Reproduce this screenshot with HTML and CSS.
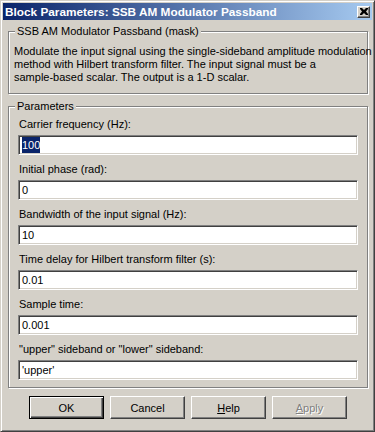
FILE: index.html
```html
<!DOCTYPE html>
<html lang="en">
<head>
    <meta charset="UTF-8">
    <meta name="viewport" content="width=device-width, initial-scale=1.0">
    <title>Block Parameters</title>
    <link rel="stylesheet" href="styles.css">
</head>
<body>
    <div class="window">
        <div class="titlebar">
            <span class="title">Block Parameters: SSB AM Modulator Passband</span>
            <div class="close-btn">
                <svg width="8" height="7" viewBox="0 0 8 7">
                    <path d="M0 0h2l2 2 2-2h2v1L6 3.5 8 6v1H6L4 5 2 7H0V6l2-2.5L0 1z" fill="#000"/>
                </svg>
            </div>
        </div>

        <div class="content">
            <div class="group group-mask">
                <span class="legend">SSB AM Modulator Passband (mask)</span>
                <p class="desc">Modulate the input signal using the single-sideband amplitude modulation<br>method with Hilbert transform filter. The input signal must be a<br>sample-based scalar. The output is a 1-D scalar.</p>
            </div>

            <div class="group group-params">
                <span class="legend">Parameters</span>
                <div class="param">
                    <div class="label">Carrier frequency (Hz):</div>
                    <div class="field"><span class="sel">100</span></div>
                </div>
                <div class="param">
                    <div class="label">Initial phase (rad):</div>
                    <div class="field">0</div>
                </div>
                <div class="param">
                    <div class="label">Bandwidth of the input signal (Hz):</div>
                    <div class="field">10</div>
                </div>
                <div class="param">
                    <div class="label">Time delay for Hilbert transform filter (s):</div>
                    <div class="field">0.01</div>
                </div>
                <div class="param">
                    <div class="label">Sample time:</div>
                    <div class="field">0.001</div>
                </div>
                <div class="param">
                    <div class="label">"upper" sideband or "lower" sideband:</div>
                    <div class="field">'upper'</div>
                </div>
            </div>

            <div class="buttons">
                <div class="btn btn-default"><span>OK</span></div>
                <div class="btn"><span>Cancel</span></div>
                <div class="btn"><span><u>H</u>elp</span></div>
                <div class="btn btn-disabled"><span><u>A</u>pply</span></div>
            </div>
        </div>
    </div>
</body>
</html>
```

FILE: styles.css
```css
body {
    margin: 0;
    background-color: #d4d0c8;
    font-family: "Liberation Sans", Arial, sans-serif;
    font-size: 11px;
    color: #000;
}

.window {
    width: 375px;
    height: 432px;
    box-sizing: border-box;
    border: 1px solid;
    border-color: #d4d0c8 #404040 #404040 #d4d0c8;
    box-shadow: inset 1px 1px 0 #fff, inset -1px -1px 0 #808080;
    padding: 2px;
    background-color: #d4d0c8;
}

.titlebar {
    height: 17px;
    display: flex;
    align-items: center;
    justify-content: space-between;
    padding: 0 2px 0 2px;
    background: linear-gradient(to right, #0a246a, #a6caf0);
}

.title {
    color: #fff;
    font-weight: bold;
    font-size: 11.8px;
    white-space: nowrap;
}

.close-btn {
    width: 13px;
    height: 12px;
    box-sizing: border-box;
    border: 1px solid;
    border-color: #fff #404040 #404040 #fff;
    box-shadow: inset -1px -1px 0 #808080;
    background-color: #d4d0c8;
    display: flex;
    align-items: center;
    justify-content: center;
}

.close-btn svg {
    display: block;
}

.content {
    padding: 11px 4px 0 5px;
}

/* etched group boxes */
.group {
    position: relative;
    border: 1px solid #808080;
    box-shadow: 1px 1px 0 #fff, inset 1px 1px 0 #fff;
}

.legend {
    position: absolute;
    top: -7px;
    left: 6px;
    padding: 0 2px;
    line-height: 13px;
    background-color: #d4d0c8;
    white-space: nowrap;
}

.group-mask {
    padding: 13px 4px 9px 5px;
}

.desc {
    margin: 0;
    line-height: 13px;
    white-space: nowrap;
}

.group-params {
    margin-top: 12px;
    padding: 11px 9px 7px 9px;
    display: flex;
    flex-direction: column;
    gap: 8px;
}

.param {
    display: flex;
    flex-direction: column;
    gap: 4px;
}

.label {
    line-height: 13px;
    padding-left: 1px;
}

.field {
    height: 20px;
    box-sizing: border-box;
    border: 1px solid;
    border-color: #808080 #fff #fff #808080;
    box-shadow: inset 1px 1px 0 #404040, inset -1px -1px 0 #d4d0c8;
    background-color: #fff;
    padding: 0 3px;
    display: flex;
    align-items: center;
}

.sel {
    background-color: #0a246a;
    color: #fff;
    line-height: 16px;
}

.buttons {
    display: flex;
    gap: 6px;
    padding: 8px 0 0 21px;
}

.btn {
    width: 75px;
    height: 23px;
    box-sizing: border-box;
    border: 1px solid;
    border-color: #fff #404040 #404040 #fff;
    box-shadow: inset -1px -1px 0 #808080, inset 1px 1px 0 #d4d0c8;
    display: flex;
    align-items: center;
    justify-content: center;
}

.btn-default {
    border: 1px solid #000;
    box-shadow: inset 1px 1px 0 #fff, inset -1px -1px 0 #404040, inset -2px -2px 0 #808080;
}

.btn-disabled {
    color: #808080;
    text-shadow: 1px 1px 0 #fff;
}
```
